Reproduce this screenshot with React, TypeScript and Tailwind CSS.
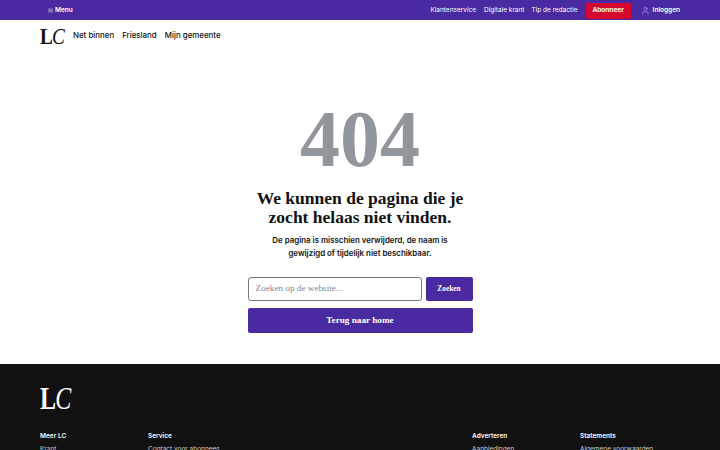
import { User } from "lucide-react";

const sans = "font-['Inter',sans-serif]";
const serif = "font-['Liberation_Serif',serif]";

const footerColumns = [
  { title: "Meer LC", link: "Krant", col: "col-start-1" },
  { title: "Service", link: "Contact voor abonnees", col: "col-start-2" },
  { title: "Adverteren", link: "Aanbiedingen", col: "col-start-5" },
  { title: "Statements", link: "Algemene voorwaarden", col: "col-start-6" },
];

function Logo({ dark }: { dark?: boolean }) {
  return (
    <div
      className={`flex items-baseline origin-left ${serif} ${
        dark
          ? "scale-x-75 h-[21px] leading-[21px] text-white text-[32px] tracking-[-1px]"
          : "scale-x-80 h-4 mt-[2px] leading-4 text-[#111] text-[24px] tracking-[-1px]"
      }`}
    >
      <span className="font-bold">L</span>
      <span className="italic">C</span>
    </div>
  );
}

function TopBar() {
  return (
    <div className={`h-5 pt-[1px] bg-[#4a2aa0] text-white flex items-center justify-between pl-[48px] pr-[40px] text-[6.5px] ${sans}`}>
      <div className="flex items-center gap-[2px] font-semibold">
        <svg width="5" height="5" viewBox="0 0 5 5" fill="none" stroke="#c9bfe8" strokeWidth="0.6">
          <path d="M0 1h5M0 2.5h5M0 4h5" />
        </svg>
        <span>Menu</span>
      </div>
      <div className="flex items-center h-full">
        <span className="mr-[8px]">Klantenservice</span>
        <span className="mr-[7px]">Digitale krant</span>
        <span className="mr-[8px]">Tip de redactie</span>
        <span className="h-4 w-[45px] flex items-center justify-center bg-[#d4082f] font-bold rounded-[1px]">Abonneer</span>
        <span className="flex items-center gap-[3px] ml-[10px] font-semibold">
          <User size={9} strokeWidth={1.25} className="text-[#d8d0f0]" />
          Inloggen
        </span>
      </div>
    </div>
  );
}

function Header() {
  return (
    <div className={`h-[30px] flex items-center pl-10 text-[#111] text-[7.9px] font-medium ${sans}`}>
      <div className="w-[33px]">
        <Logo />
      </div>
      <div className="flex gap-2 mt-[1px]">
        <span>Net binnen</span>
        <span>Friesland</span>
        <span>Mijn gemeente</span>
      </div>
    </div>
  );
}

function NotFound() {
  return (
    <main className="h-[314px] flex flex-col items-center">
      <div className={`mt-[49px] text-[80px] leading-[80px] font-bold text-[#91969c] ${serif}`}>404</div>
      <h1 className={`mt-[10px] text-center text-[17.5px] leading-[19px] font-bold text-[#111] ${serif}`}>
        We kunnen de pagina die je
        <br />
        zocht helaas niet vinden.
      </h1>
      <p className={`mt-[7px] text-center text-[7.9px] leading-[13px] font-semibold text-[#111] ${sans}`}>
        De pagina is misschien verwijderd, de naam is
        <br />
        gewijzigd of tijdelijk niet beschikbaar.
      </p>
      <div className="mt-[17px] w-[225px] flex flex-col gap-[7px]">
        <div className="flex gap-[4px] h-6">
          <div className={`flex-1 flex items-center pl-[7px] bg-white border border-[#77777c] rounded-[3px] text-[9.2px] text-[#85858a] ${serif}`}>
            Zoeken op de website...
          </div>
          <button className={`w-[47px] bg-[#4a2aa0] rounded-[2px] text-white text-[7.4px] font-bold ${serif}`}>Zoeken</button>
        </div>
        <button className={`h-[25px] bg-[#4a2aa0] rounded-[2px] text-white text-[9.2px] font-bold ${serif}`}>Terug naar home</button>
      </div>
    </main>
  );
}

function Footer() {
  return (
    <footer className={`h-[86px] bg-[#111111] overflow-hidden pt-6 px-10 text-white ${sans}`}>
      <Logo dark />
      <div className="mt-[22px] grid grid-cols-[repeat(6,108px)] text-[6.5px] leading-[10px]">
        {footerColumns.map((c) => (
          <div key={c.title} className={`${c.col} row-start-1`}>
            <div className="font-semibold">{c.title}</div>
            <div className="mt-[3px] text-[#cfcfcf]">{c.link}</div>
          </div>
        ))}
      </div>
    </footer>
  );
}

export default function App() {
  return (
    <div className="w-[720px] h-[450px] overflow-hidden bg-white">
      <TopBar />
      <Header />
      <NotFound />
      <Footer />
    </div>
  );
}
